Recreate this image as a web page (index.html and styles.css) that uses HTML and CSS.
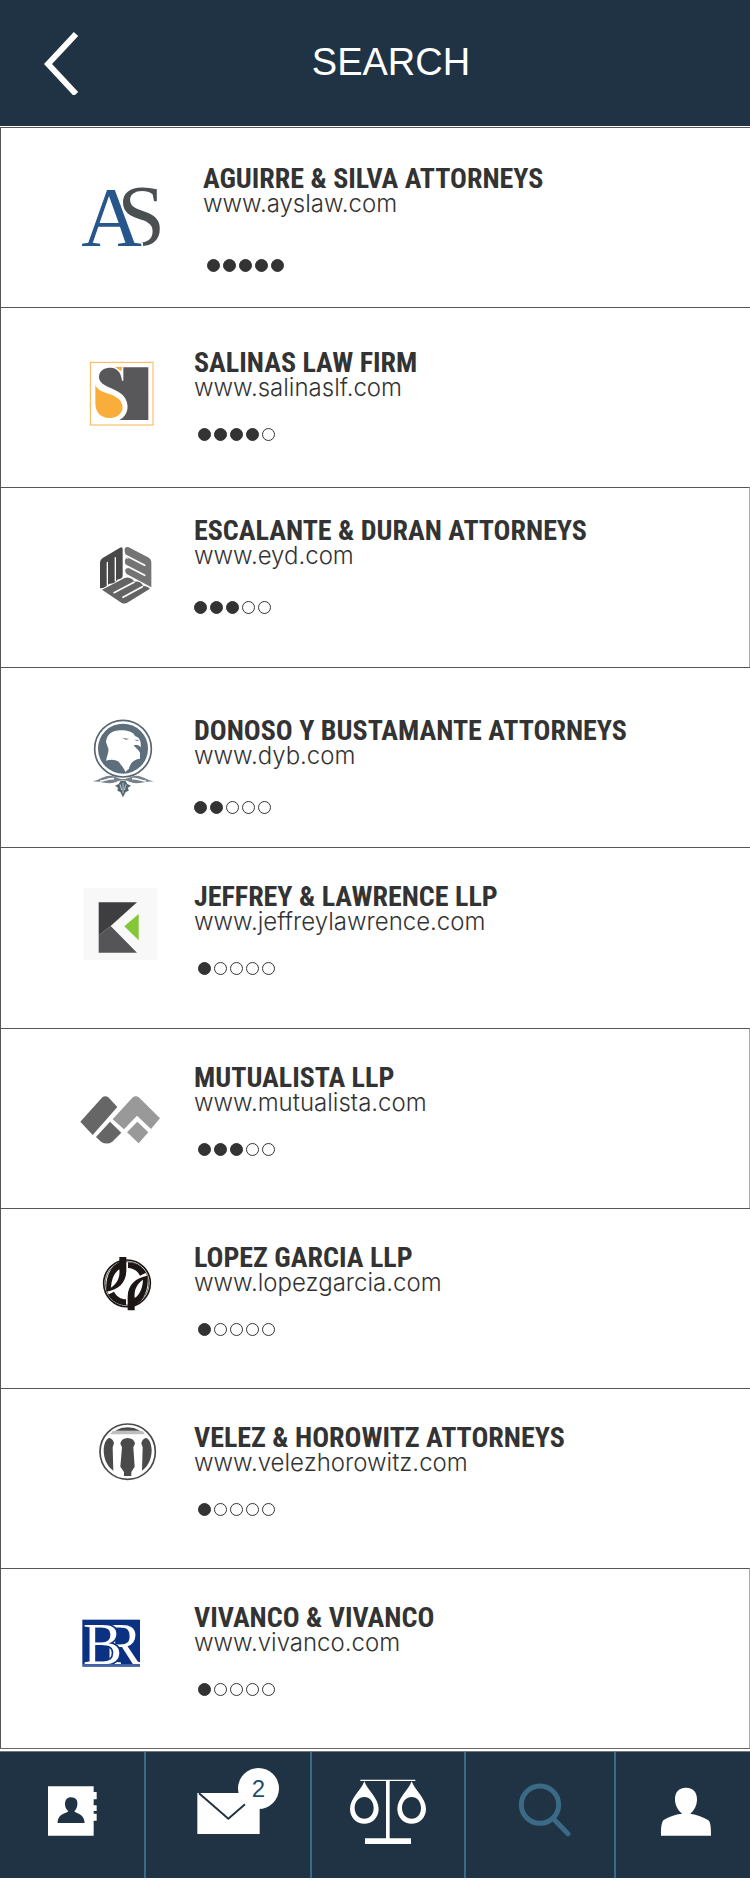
FILE: index.html
```html
<!DOCTYPE html>
<html lang="en">
  <head>
    <meta charset="UTF-8">
    <meta name="viewport" content="width=device-width, initial-scale=1">
    <title>Search</title>
    <link rel="stylesheet" href="styles.css">
  </head>
  <body>
    <header class="topbar">
      <button class="back" type="button" aria-label="Back">
        <svg width="36" height="64" viewBox="0 0 36 64"><path d="M32 3 L4 33 L32 63" fill="none" stroke="#fff" stroke-width="6"/></svg>
      </button>
      <h1 class="title">SEARCH</h1>
    </header>

    <main class="firms">
      <article class="firm firm-featured">
        <svg class="logo" viewBox="54 33 264 300">
          <text class="logo-text" x="172" y="284" font-size="258" fill="#4a4f52">S</text>
          <text class="logo-text logo-front" x="64" y="287" font-size="252" fill="#26568b" stroke="#fff">A</text>
        </svg>
        <div class="info">
          <h2 class="name">AGUIRRE &amp; SILVA ATTORNEYS</h2>
          <a class="url" href="#">www.ayslaw.com</a>
          <div class="rating" role="img" aria-label="5 of 5"><i class="dot on"></i><i class="dot on"></i><i class="dot on"></i><i class="dot on"></i><i class="dot on"></i></div>
        </div>
      </article>

      <article class="firm firm-mid">
        <svg class="logo" viewBox="54 573 264 300">
          <rect x="91" y="637" width="188" height="188" fill="#fff" stroke="#f9b44c" stroke-width="3"/>
          <path d="M190 652 H265 V810 H178 C207 795 210 760 190 737 C168 712 116 710 117 680 C118 660 135 653 152 653 C172 654 184 668 186 692 H190 Z" fill="#58585a"/>
          <path d="M106 706 C120 738 182 725 188 770 C188 795 165 804 148 804 C120 804 106 785 106 760 Z" fill="#f9ae3b"/>
          <path d="M165 651 H187 L184 664 Z" fill="#f9ae3b"/>
        </svg>
        <div class="info">
          <h2 class="name">SALINAS LAW FIRM</h2>
          <a class="url" href="#">www.salinaslf.com</a>
          <div class="rating" role="img" aria-label="4 of 5"><i class="dot on"></i><i class="dot on"></i><i class="dot on"></i><i class="dot on"></i><i class="dot"></i></div>
        </div>
      </article>

      <article class="firm firm-high firm-boxed">
        <svg class="logo" viewBox="54 63 264 300">
          <path d="M120 188 Q120 179 128 174 L180 143 Q188 139 188 148 V228 Q187 237 174 238 L166 246 Q158 252 148 251 L140 258 Q130 266 120 265 Z" fill="#484848"/>
          <path d="M142 187 V256 M166 173 V243" stroke="#fff" stroke-width="4" stroke-linecap="round"/>
          <path d="M194 146 Q196 139 206 142 L264 172 Q274 178 274 188 V262 L200 222 Q194 217 196 208 Q199 203 206 205 L196 192 Q192 182 198 174 L206 178 L197 164 Q193 155 194 146 Z" fill="#747474"/>
          <path d="M196 166 L254 196 M196 196 L254 226" stroke="#fff" stroke-width="5" stroke-linecap="round"/>
          <path d="M126 269 L194 234 Q206 230 217 238 L224 245 Q238 242 245 251 L250 258 Q262 257 270 266 L204 307 Q195 314 184 308 Z" fill="#646464"/>
          <path d="M162 278 L222 247 M189 292 L247 260" stroke="#fff" stroke-width="5" stroke-linecap="round"/>
        </svg>
        <div class="info">
          <h2 class="name">ESCALANTE &amp; DURAN ATTORNEYS</h2>
          <a class="url" href="#">www.eyd.com</a>
          <div class="rating" role="img" aria-label="3 of 5"><i class="dot on"></i><i class="dot on"></i><i class="dot on"></i><i class="dot"></i><i class="dot"></i></div>
        </div>
      </article>

      <article class="firm firm-low">
        <svg class="logo" viewBox="54 603 264 300">
          <circle cx="189" cy="746" r="85" fill="#fff" stroke="#586671" stroke-width="5"/>
          <circle cx="189" cy="746" r="75" fill="#5d6f7d"/>
          <path d="M138 726 C140 700 160 688 190 691 C210 692 222 700 226 709 C238 712 244 722 242 742 C238 735 230 734 221 735 C225 743 237 750 240 758 V776 C222 778 211 788 207 806 L196 816 C190 800 180 792 177 786 C165 777 150 778 138 782 C142 765 147 755 145 746 Z" fill="#fff"/>
          <path d="M186 713 L208 717 L198 719 Z M222 719 L238 720 L232 723 Z" fill="#5d6f7d"/>
          <path d="M97 845 C118 838 132 828 148 827 C168 827 172 837 189 837 C206 837 212 827 230 827 C246 828 260 838 282 845 C258 843 244 850 228 850 C212 849 203 841 189 841 C175 841 166 849 150 850 C132 850 120 843 97 845 Z" fill="#76828b"/>
          <path d="M120 843 C138 842 145 834 162 836 M258 843 C240 842 233 834 216 836" fill="none" stroke="#fff" stroke-width="5"/>
          <path d="M189 892 L181 876 L172 872 L174 863 L165 857 L176 852 L182 842 H196 L202 852 L213 857 L204 863 L206 872 L197 876 Z" fill="#536571"/>
          <path d="M189 848 V880 M180 853 L185 870 M198 853 L193 870" stroke="#fff" stroke-width="2"/>
        </svg>
        <div class="info">
          <h2 class="name">DONOSO Y BUSTAMANTE ATTORNEYS</h2>
          <a class="url" href="#">www.dyb.com</a>
          <div class="rating" role="img" aria-label="2 of 5"><i class="dot on"></i><i class="dot on"></i><i class="dot"></i><i class="dot"></i><i class="dot"></i></div>
        </div>
      </article>

      <article class="firm">
        <svg class="logo" viewBox="54 63 264 300">
          <rect x="71" y="84" width="221" height="216" fill="#f8f8f8"/>
          <path d="M116 127 H231 L152 198 L116 226 Z" fill="#3e3e40"/>
          <path d="M116 226 L152 198 L231 278 H116 Z" fill="#555557"/>
          <path d="M193 199 L236 162 V241 Z" fill="#83c636"/>
        </svg>
        <div class="info">
          <h2 class="name">JEFFREY &amp; LAWRENCE LLP</h2>
          <a class="url" href="#">www.jeffreylawrence.com</a>
          <div class="rating" role="img" aria-label="1 of 5"><i class="dot on"></i><i class="dot"></i><i class="dot"></i><i class="dot"></i><i class="dot"></i></div>
        </div>
      </article>

      <article class="firm firm-boxed">
        <svg class="logo" viewBox="54 603 264 300">
          <path d="M61 782 L127 709 Q136 702 145 709 L172 738 L98 822 Z" fill="#666"/>
          <path d="M108 828 L150 782 L184 815 L157 842 Q142 853 124 843 Z" fill="#666"/>
          <path d="M158 775 L217 710 Q227 702 238 710 L300 772 L273 804 L231 764 L192 805 Z" fill="#999"/>
          <path d="M201 814 L232 782 L265 814 L236 847 Z" fill="#999"/>
        </svg>
        <div class="info">
          <h2 class="name">MUTUALISTA LLP</h2>
          <a class="url" href="#">www.mutualista.com</a>
          <div class="rating" role="img" aria-label="3 of 5"><i class="dot on"></i><i class="dot on"></i><i class="dot on"></i><i class="dot"></i><i class="dot"></i></div>
        </div>
      </article>

      <article class="firm">
        <svg class="logo" viewBox="54 66 264 300">
          <circle cx="201" cy="190" r="70" fill="#fff" stroke="#1c1715" stroke-width="5"/>
          <circle cx="201" cy="190" r="65" fill="none" stroke="#1c1715" stroke-width="2"/>
          <g id="leaf" fill="#1c1715">
            <path d="M178 111 H199 V152 C198 190 175 208 139 215 C136 175 148 142 178 126 Z"/>
            <path d="M178 148 C160 160 154 182 153 203 C170 192 181 173 178 148 Z" fill="#fff"/>
            <path d="M204 127 C228 127 246 139 258 158 L240 167 C232 152 220 145 204 144 Z"/>
          </g>
          <use href="#leaf" transform="rotate(180 201 191)"/>
        </svg>
        <div class="info">
          <h2 class="name">LOPEZ GARCIA LLP</h2>
          <a class="url" href="#">www.lopezgarcia.com</a>
          <div class="rating" role="img" aria-label="1 of 5"><i class="dot on"></i><i class="dot"></i><i class="dot"></i><i class="dot"></i><i class="dot"></i></div>
        </div>
      </article>

      <article class="firm">
        <svg class="logo" viewBox="54 606 264 300">
          <circle cx="203" cy="695" r="83" fill="#fff" stroke="#4a4a4a" stroke-width="5"/>
          <path d="M165 632 Q203 612 241 632 Z" fill="#4a4a4a"/>
          <path d="M158 633 H248 L255 643 H151 Z" fill="#bdbdbd"/>
          <g id="arch" fill="#4a4a4a">
            <path d="M131 690 C132 670 139 655 149 654 Q159 657 162 670 L158 682 L160 752 C140 738 131 715 131 690 Z"/>
          </g>
          <use href="#arch" transform="matrix(-1 0 0 1 406 0)"/>
          <path d="M181 671 Q184 655 203 654 Q222 655 225 671 L220 682 L224 740 L214 756 V768 H192 V756 L181 740 L186 682 Z" fill="#4a4a4a"/>
        </svg>
        <div class="info">
          <h2 class="name">VELEZ &amp; HOROWITZ ATTORNEYS</h2>
          <a class="url" href="#">www.velezhorowitz.com</a>
          <div class="rating" role="img" aria-label="1 of 5"><i class="dot on"></i><i class="dot"></i><i class="dot"></i><i class="dot"></i><i class="dot"></i></div>
        </div>
      </article>

      <article class="firm firm-boxed">
        <svg class="logo" viewBox="54 99 264 300">
          <rect x="67" y="152" width="173" height="141" fill="#0b3282"/>
          <text class="logo-text" x="129" y="284" font-size="176" fill="#fff">R</text>
          <text class="logo-text logo-front" x="69" y="284" font-size="176" fill="#fff" stroke="#0b3282">B</text>
          <path d="M67 288 H240" stroke="#b9c6e0" stroke-width="2"/>
        </svg>
        <div class="info">
          <h2 class="name">VIVANCO &amp; VIVANCO</h2>
          <a class="url" href="#">www.vivanco.com</a>
          <div class="rating" role="img" aria-label="1 of 5"><i class="dot on"></i><i class="dot"></i><i class="dot"></i><i class="dot"></i><i class="dot"></i></div>
        </div>
      </article>
    </main>

    <nav class="tabs">
      <a class="tab" href="#" aria-label="Contacts">
        <svg class="icon" viewBox="97 123 240 240">
          <path d="M145 169 H282 V317 H145 Z M282 186 H291 V208 H282 Z M282 226 H291 V243 H282 Z M282 251 H291 V272 H282 Z" fill="#fff"/>
          <path d="M214 202 C228 202 235 211 233 224 C232 234 228 240 224 243 C226 251 254 249 255 279 H174 C174 249 203 251 206 243 C200 239 196 232 196 222 C196 210 203 202 214 202 Z" fill="#1f3344"/>
        </svg>
      </a>
      <a class="tab" href="#" aria-label="Messages">
        <span class="mail">
          <svg class="icon" viewBox="564 123 240 240">
            <rect x="592" y="189" width="187" height="123" fill="#fff"/>
            <path d="M597 190 L685 266 L735 223" fill="none" stroke="#1f3344" stroke-width="6"/>
          </svg>
          <span class="badge">2</span>
        </span>
      </a>
      <a class="tab" href="#" aria-label="Cases">
        <svg class="icon" viewBox="-6 123 240 240">
          <path d="M31 149 H196 V153 H119 V325 H183 V342 H45 V325 H108 V153 H31 Z" fill="#fff"/>
          <path id="pan" fill-rule="evenodd" fill="#fff" d="M43 154 C52 180 86 205 86 237 C86 264 66 281 43 281 C20 281 0 264 0 237 C0 205 34 180 43 154 Z M43 201 C27 201 14 215 14 234 C14 253 27 266 43 266 C59 266 71 253 71 234 C71 215 59 201 43 201 Z"/>
          <use href="#pan" x="142"/>
        </svg>
      </a>
      <a class="tab" href="#" aria-label="Search" aria-current="page">
        <svg class="icon" viewBox="451 123 240 240">
          <g fill="none" stroke="#3a6a86" stroke-width="15" stroke-linecap="round">
            <circle cx="571" cy="224" r="56"/>
            <path d="M612 267 L655 311"/>
          </g>
        </svg>
      </a>
      <a class="tab" href="#" aria-label="Profile">
        <svg class="icon" viewBox="879 123 240 240">
          <path d="M1008 173 C1031 173 1042 188 1041 211 C1040 228 1033 241 1021 251 C1042 253 1059 262 1074 270 C1083 275 1083 300 1083 317 H933 C933 300 933 277 941 270 C957 260 975 253 996 251 C984 241 976 228 975 211 C974 188 985 173 1008 173 Z" fill="#fff"/>
        </svg>
      </a>
    </nav>
  </body>
</html>
```

FILE: styles.css
```css
* {
  box-sizing: border-box;
}
body {
  display: flex;
  flex-direction: column;
  min-height: 100vh;
  margin: 0;
  padding-bottom: 4px;
  background-color: #fff;
  color: #333;
  font-family: "Liberation Sans", Arial, sans-serif;
}
.topbar {
  display: flex;
  align-items: center;
  height: 126px;
  margin-bottom: 1px;
  padding: 0 48px 0 44px;
  background-color: #1f3344;
}
.back {
  width: 36px;
  height: 64px;
  padding: 0;
  border: 0;
  background: none;
  cursor: pointer;
}
.back svg {
  display: block;
}
.title {
  flex: 1;
  margin: 0;
  padding-bottom: 2px;
  color: #fff;
  font-size: 38px;
  font-weight: 400;
  line-height: 44px;
  text-align: center;
}
.firms {
  display: flex;
  flex: 1;
  flex-direction: column;
  border-bottom: 1px solid #666;
}
.firm {
  display: flex;
  flex: 1 0 180px;
  gap: 28px;
  padding: 33px 24px 0 77px;
  border-top: 1px solid #555;
  border-left: 1px solid #555;
}
.firm-boxed {
  border-right: 1px solid #aaa;
}
.logo {
  flex: none;
  width: 88px;
  height: 100px;
  overflow: visible;
}
.logo-text {
  font-family: "Liberation Serif", "Times New Roman", serif;
}
.logo-front {
  stroke-width: 10px;
  paint-order: stroke;
}
.info {
  flex: 1;
  padding-top: 2px;
}
.name {
  margin: 0;
  font-family: "Roboto Condensed", "Liberation Sans Narrow", "Arial Narrow", sans-serif;
  font-size: 28px;
  font-weight: 700;
  line-height: 28px;
}
.url {
  display: block;
  color: #333;
  font-family: Inter, "Liberation Sans", sans-serif;
  font-size: 24px;
  font-weight: 300;
  line-height: 22px;
  text-decoration: none;
}
.url:hover {
  text-decoration: underline;
}
.rating {
  display: flex;
  gap: 3px;
  margin-top: 29px;
  padding-left: 4px;
}
.dot {
  width: 13px;
  height: 13px;
  border: 1px solid #333;
  border-radius: 50%;
}
.dot.on {
  background-color: #333;
}

/* rows whose text sits off the usual line */
.firm-featured {
  gap: 37px;
}
.firm-featured .info {
  padding-top: 4px;
}
.firm-featured .rating {
  margin-top: 44px;
}
.firm-mid .info {
  padding-top: 8px;
}
.firm-high {
  padding-top: 29px;
}
.firm-high .info {
  padding-top: 0;
}
.firm-high .logo {
  margin-top: 4px;
}
.firm-low .info {
  padding-top: 16px;
}
.firm-high .rating,
.firm-low .rating {
  margin-top: 34px;
  padding-left: 0;
}

.tabs {
  display: grid;
  grid-template-columns: 146fr 166fr 154fr 150fr 134fr;
  height: 127px;
  margin-top: 2px;
  border-top: 1px solid #777;
  background-color: #1f3344;
}
.tab {
  display: flex;
  align-items: center;
  justify-content: center;
  padding-bottom: 8px;
  border-right: 2px solid #3a6a86;
}
.tab:last-child {
  border-right: 0;
}
.icon {
  display: block;
  width: 80px;
  height: 80px;
}
.mail {
  position: relative;
}
.badge {
  position: absolute;
  top: -3px;
  right: -11px;
  width: 41px;
  height: 41px;
  border-radius: 50%;
  background-color: #fff;
  color: #1f4d6b;
  font-size: 24px;
  line-height: 41px;
  text-align: center;
}
```
